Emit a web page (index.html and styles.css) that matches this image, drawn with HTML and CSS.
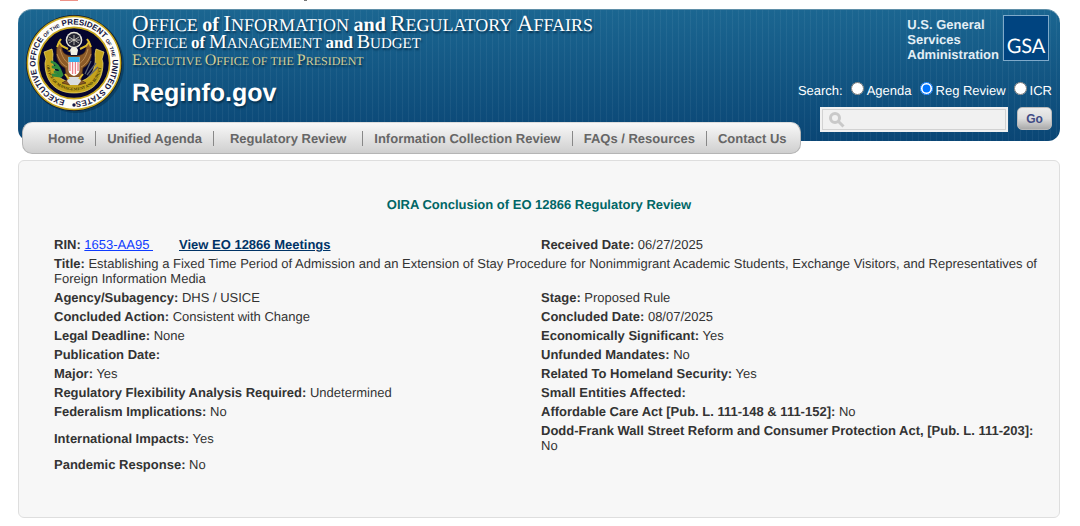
FILE: index.html
```html
<!DOCTYPE html>
<html lang="en">
<head>
<meta charset="utf-8">
<title>OIRA Conclusion of EO 12866 Regulatory Review</title>
<link rel="stylesheet" href="styles.css">
</head>
<body>
<div class="top-strip" aria-hidden="true"><span class="strip-mark"></span><span class="strip-tick"></span></div>
<header>
  <div class="masthead">
    <svg class="seal" viewBox="0 0 100 100" role="img" aria-label="Executive Office of the President seal">
      <defs>
        <path id="ring" d="M48 86.5A38.5 38.5 0 0 1 48 9.5A38.5 38.5 0 0 1 48 86.5"/>
        <path id="scroll" d="M20 42Q20 74 48 75.500Q76 74 76 42"/>
      </defs>
      <circle cx="50" cy="50" r="48" fill="#062f4c" opacity=".55"/>
      <circle cx="48" cy="48" r="48" fill="#15151f"/>
      <circle cx="48" cy="48" r="47.300" fill="#c9a91f"/>
      <circle cx="48" cy="48" r="45.800" fill="#fffef8"/>
      <circle cx="48" cy="48" r="36.500" fill="#c9a91f"/>
      <circle cx="48" cy="48" r="34.800" fill="#05052e"/>
      <text class="seal-text"><textPath href="#ring" startOffset="9">EXECUTIVE OFFICE <tspan class="seal-small">OF THE</tspan> PRESIDENT <tspan class="seal-small">OF THE</tspan> UNITED STATES</textPath></text>
      <circle cx="48" cy="90" r="1.700" fill="#151542"/>
      <path d="M18 37l8-3 1 5c-2 20 8 28 21 28s23-8 21-28l1-5 8 3-2 7 1 4c0 20-12 30-29 30S19 68 19 48l1-4z" fill="#c3a31c" stroke="#fbe36a" stroke-width=".7"/>
      <text class="scroll-text"><textPath href="#scroll" startOffset="8">OFFICE OF MANAGEMENT AND BUDGET</textPath></text>
      <path d="M26 47c5 1 8 7 10 13M27 52l6 1M29 57l6 1M27 60l8 1" stroke="#2f8a3e" stroke-width="2.800" stroke-linecap="round" fill="none"/>
      <path d="M61 60l9-12M59 59l6-13M63 61l9-9" stroke="#5b6270" stroke-width="1.300"/>
      <path d="M32 28c4 1 4 3 4 6 1 5 5 6 9 7h6c4-1 8-2 9-7 0-3 0-5 4-6 3 10 2 20-7 25l-2 12 5 3-8 2-4-6-4 6-8-2 5-3-2-12c-9-5-10-15-7-25z" fill="#8b5a28" stroke="#4b2c12" stroke-width=".7"/>
      <path d="M34 34c2 8 5 12 9 15M31 39c3 8 6 11 10 13M62 34c-2 8-5 12-9 15M65 39c-3 8-6 11-10 13" stroke="#c8995b" stroke-width=".8" fill="none"/>
      <path d="M35 24l-2 3 3 4 6 3M61 24l2 3-3 4-6 3M33 27l-2 5M63 27l2 5" stroke="#dfbd30" stroke-width="2" fill="none"/>
      <circle cx="48" cy="25" r="8.300" fill="#e9e7dc"/>
      <circle cx="48" cy="25" r="6.800" fill="#252532"/>
      <path d="M43 22l10 6M43 28l10-6M48 20v10M42 25h12" stroke="#d8d6cb" stroke-width=".8"/>
      <path d="M44 35q1-3 4-3t4 3l-1 5h-6z" fill="#f2f0e4"/><path d="M44 35l-3 1 3 1z" fill="#dfbd30"/>
      <path d="M42.500 42h11v13q0 4-5.500 6-5.500-2-5.500-6z" fill="#fff"/>
      <path d="M44 46v10M46.600 46v13M49.400 46v13M52 46v10" stroke="#ec7f86" stroke-width="1.300"/>
      <path d="M42.500 42h11v5h-11z" fill="#35aee8"/>
      <path d="M43 62h10l2 4-3 4h-8l-3-4z" fill="#d8dde0"/>
      <path d="M39 59l4 5M57 59l-4 5" stroke="#dfbd30" stroke-width="2"/>
    </svg>
    <div class="brand">
      <div class="brand-line office"><span>Office</span> <b>of</b> <span>Information</span> <b>and</b> <span>Regulatory</span> <span>Affairs</span></div>
      <div class="brand-line budget"><span>Office</span> <b>of</b> <span>Management</span> <b>and</b> <span>Budget</span></div>
      <div class="brand-line president"><span>Executive</span> <span>Office</span> <span class="minor">of</span> <span class="minor">the</span> <span>President</span></div>
      <div class="site-name">Reginfo.gov</div>
    </div>
    <div class="tools">
      <div class="gsa">
        <div class="gsa-name">U.S. General<br>Services<br>Administration</div>
        <div class="gsa-logo">GSA</div>
      </div>
      <form class="search">
        <div class="scope">
          <span class="scope-label">Search:</span>
          <label><input type="radio" name="scope">Agenda</label>
          <label><input type="radio" name="scope" checked>Reg Review</label>
          <label><input type="radio" name="scope">ICR</label>
        </div>
        <div class="query">
          <div class="query-box">
            <svg class="lens" viewBox="0 0 16 16" aria-hidden="true"><circle cx="6" cy="6" r="4.500"/><path d="M9.500 9.500l5 5"/></svg>
            <input type="text" aria-label="Search text">
          </div>
          <button type="button">Go</button>
        </div>
      </form>
    </div>
  </div>
  <nav>
    <a href="#">Home</a>
    <a href="#">Unified Agenda</a>
    <a href="#" class="roomy">Regulatory Review</a>
    <a href="#">Information Collection Review</a>
    <a href="#">FAQs / Resources</a>
    <a href="#">Contact Us</a>
  </nav>
</header>
<main>
  <h1>OIRA Conclusion of EO 12866 Regulatory Review</h1>
  <table>
    <colgroup><col class="first"><col></colgroup>
    <tr><td><b>RIN:</b> <a href="#" class="rin">1653-AA95&nbsp;</a><a href="#" class="meetings">View EO 12866 Meetings</a></td><td><b>Received Date:</b> 06/27/2025</td></tr>
    <tr><td colspan="2"><b>Title:</b> Establishing a Fixed Time Period of Admission and an Extension of Stay Procedure for Nonimmigrant Academic Students, Exchange Visitors, and Representatives of Foreign Information Media</td></tr>
    <tr><td><b>Agency/Subagency:</b> DHS / USICE</td><td><b>Stage:</b> Proposed Rule</td></tr>
    <tr><td><b>Concluded Action:</b> Consistent with Change</td><td><b>Concluded Date:</b> 08/07/2025</td></tr>
    <tr><td><b>Legal Deadline:</b> None</td><td><b>Economically Significant:</b> Yes</td></tr>
    <tr><td><b>Publication Date:</b></td><td><b>Unfunded Mandates:</b> No</td></tr>
    <tr><td><b>Major:</b> Yes</td><td><b>Related To Homeland Security:</b> Yes</td></tr>
    <tr><td><b>Regulatory Flexibility Analysis Required:</b> Undetermined</td><td><b>Small Entities Affected:</b></td></tr>
    <tr><td><b>Federalism Implications:</b> No</td><td><b>Affordable Care Act [Pub. L. 111-148 &amp; 111-152]:</b> No</td></tr>
    <tr><td><b>International Impacts:</b> Yes</td><td><b>Dodd-Frank Wall Street Reform and Consumer Protection Act, [Pub. L. 111-203]:</b><br>No</td></tr>
    <tr><td><b>Pandemic Response:</b> No</td><td></td></tr>
  </table>
</main>
</body>
</html>
```
FILE: styles.css
```css
body {
  margin: 0 20px 0 18px;
  background: #fff;
  color: #333;
  font: 13px/15px "Liberation Sans", Arial, sans-serif;
  text-rendering: geometricPrecision;
}

.top-strip {
  display: flex;
  gap: 226px;
  height: 9px;
  padding-left: 42px;
}
.strip-mark { width: 18px; height: 1px; background: #ee9288; }
.strip-tick { width: 3px; height: 1px; background: #777; }

.masthead {
  display: flex;
  box-sizing: border-box;
  min-height: 132px;
  padding: 5px 8px 0;
  border-top: 1px solid #5f8fa8;
  border-radius: 14px 14px 12px 12px;
  color: #fff;
  background:
    repeating-linear-gradient(90deg, rgba(255, 255, 255, .05) 0 1px, transparent 1px 6px),
    linear-gradient(#1b6691, #0a4675);
}

.seal { flex: none; width: 100px; height: 100px; }
.seal-text { font: bold 8px "Liberation Sans", Arial, sans-serif; fill: #151542; }
.seal-small { font-size: 5px; }
.scroll-text { font: bold 4px "Liberation Serif", serif; fill: #40360a; }

.brand { flex: 1; padding-left: 6px; }
.brand-line {
  font-family: "Liberation Serif", "Times New Roman", serif;
  text-shadow: 1px 2px 2px #05304e;
  white-space: nowrap;
}
.brand-line span { display: inline-block; text-transform: uppercase; }
.office { font-size: 18px; line-height: 18px; }
.office span::first-letter { font-size: 23px; line-height: 18px; }
.office b { font-size: 20px; line-height: 18px; }
.budget { font-size: 15px; line-height: 17px; }
.budget span::first-letter { font-size: 20px; line-height: 17px; }
.budget b { font-size: 17px; line-height: 17px; }
.president { font-size: 12px; line-height: 16px; color: #d5cf96; }
.president span::first-letter { font-size: 16px; line-height: 16px; }
.president .minor::first-letter { font-size: 12px; }
.site-name {
  margin-top: 9px;
  font-size: 25px;
  line-height: 30px;
  font-weight: bold;
  text-shadow: 1px 2px 2px #05304e;
}

.tools { display: flex; flex-direction: column; align-items: flex-end; }
.gsa { display: flex; gap: 4px; padding-right: 3px; }
.gsa-name { padding-top: 2px; font-weight: bold; color: #e3eef5; }
.gsa-logo {
  box-sizing: border-box;
  width: 46px;
  height: 46px;
  padding-top: 19px;
  border: 1px solid #7faaca;
  background: #004480;
  font: 20px/22px Lato, sans-serif;
  text-align: center;
}

.search { padding-top: 20px; }
.scope { display: flex; justify-content: flex-end; gap: 8px; line-height: 18px; }
.scope label { display: flex; gap: 3px; }
.scope input { width: 13px; height: 13px; margin: 0; }
.query { display: flex; justify-content: flex-end; gap: 9px; padding-top: 7px; }
.query-box { position: relative; width: 188px; height: 25px; }
.query-box input {
  box-sizing: border-box;
  width: 100%;
  height: 100%;
  padding: 0 4px 0 26px;
  border: 2px solid #f1f1f1;
  background: #f1f1f1;
  box-shadow: inset 0 0 0 1px #d2d2d2;
}
.lens { position: absolute; top: 5px; left: 9px; width: 16px; height: 16px; fill: none; stroke: #c9c9c9; stroke-width: 3; }
.query button {
  width: 35px;
  height: 23px;
  padding: 0;
  border: 1px solid #bbb;
  border-radius: 5px;
  background: linear-gradient(#ececec, #ddd 50%, #aaa);
  color: #414b85;
  font: bold 12px "Liberation Sans", Arial, sans-serif;
}

nav {
  display: flex;
  position: relative;
  align-items: center;
  box-sizing: border-box;
  width: max-content;
  height: 32px;
  margin: -19px 0 0 4px;
  padding: 0 2px 0 14px;
  border: 1px solid #b5b5b5;
  border-top-color: #ddd;
  border-radius: 10px;
  background: linear-gradient(#f9f9f9, #cfcfcf);
}
nav a {
  padding: 0 11px;
  color: #666;
  font-weight: bold;
  text-decoration: none;
}
nav a + a { border-left: 1px solid #888; }
nav .roomy { padding: 0 16px; }

main {
  margin-top: 6px;
  padding: 36px 0 42px;
  border: 1px solid #dedede;
  border-radius: 6px;
  background: #f7f7f7;
}
h1 { margin: 0 0 21px; font-size: 13px; line-height: 16px; text-align: center; color: #066; }
table {
  width: calc(100% - 46px);
  margin: 0 14px 0 32px;
  table-layout: fixed;
  border-spacing: 2px;
}
.first { width: 485px; }
td { padding: 1px; }
.rin { color: #0f3bff; }
.meetings { margin-left: 26px; color: #036; font-weight: bold; }
```
